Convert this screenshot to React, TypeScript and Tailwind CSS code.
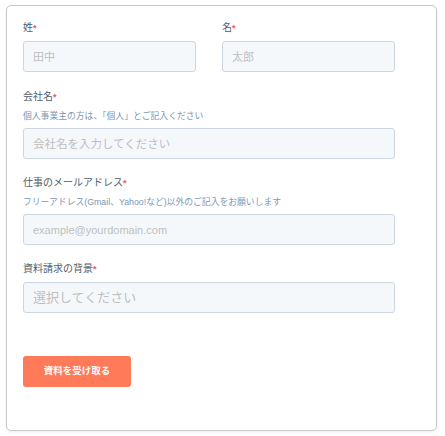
import React from "react";

const font = { fontFamily: '"Liberation Sans", "Noto Sans CJK JP", sans-serif' };

function Label({ text }: { text: string }) {
  return (
    <div className="h-[14px] text-[10px] leading-[14px] text-[#4f5d6b]">
      {text}
      <span className="text-[9px] align-top font-bold text-[#f2545b]">*</span>
    </div>
  );
}

function Helper({ text }: { text: string }) {
  return (
    <div className="mt-[6px] h-[12px] text-[8.8px] leading-[12px] text-[#7c98b6] whitespace-nowrap">
      {text}
    </div>
  );
}

function Input({ placeholder, size = "text-[11px]" }: { placeholder: string; size?: string }) {
  return (
    <input
      placeholder={placeholder}
      className={`block h-[31px] w-full rounded-[3px] border border-[#cbd6e2] bg-[#f5f8fa] px-[9px] ${size} text-[#33475b] placeholder:text-[#bfbfbf] outline-none`}
      style={font}
    />
  );
}

export default function App() {
  return (
    <div className="bg-white w-[445px] h-[436px] pt-[5px] pl-[6px]" style={font}>
      <div className="w-[431px] h-[426px] rounded-[5px] border border-[#c8c8c8] bg-white shadow-[0_1px_3px_rgba(0,0,0,0.08)] pl-[16px] pr-[41px] pt-[15px]">
        <div className="grid grid-cols-2 gap-x-[26px]">
          <div>
            <Label text="姓" />
            <div className="mt-[6px]">
              <Input placeholder="田中" />
            </div>
          </div>
          <div>
            <Label text="名" />
            <div className="mt-[6px]">
              <Input placeholder="太郎" />
            </div>
          </div>
        </div>

        <div className="mt-[18px]">
          <Label text="会社名" />
          <Helper text="個人事業主の方は、「個人」とご記入ください" />
          <div className="mt-[6px]">
            <Input placeholder="会社名を入力してください" size="text-[11.5px]" />
          </div>
        </div>

        <div className="mt-[17px]">
          <Label text="仕事のメールアドレス" />
          <Helper text="フリーアドレス(Gmail、Yahoo!など)以外のご記入をお願いします" />
          <div className="mt-[6px]">
            <Input placeholder="example@yourdomain.com" size="text-[11px]" />
          </div>
        </div>

        <div className="mt-[17px]">
          <Label text="資料請求の背景" />
          <div className="mt-[6px]">
            <div className="flex h-[31px] w-full items-center rounded-[3px] border border-[#cbd6e2] bg-[#f5f8fa] px-[9px] text-[13px] text-[#bfbfbf]">
              選択してください
            </div>
          </div>
        </div>

        <div className="mt-[43px]">
          <button className="flex h-[31px] w-[108px] items-center justify-center rounded-[3px] bg-[#ff7a59] text-[9.5px] font-bold text-white">
            資料を受け取る
          </button>
        </div>
      </div>
    </div>
  );
}
